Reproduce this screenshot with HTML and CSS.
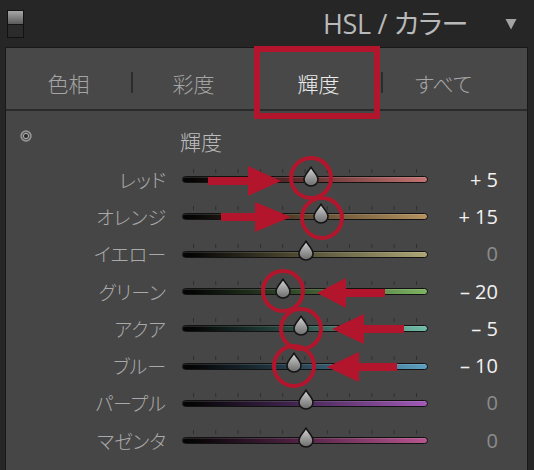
FILE: index.html
```html
<!DOCTYPE html>
<html lang="ja">
<head>
<meta charset="utf-8">
<title>HSL / カラー</title>
<link rel="stylesheet" href="styles.css">
</head>
<body>
<div class="page">
  <svg class="defs" width="0" height="0" aria-hidden="true">
    <defs>
      <linearGradient id="thumbGrad" x1="0" y1="0" x2="0" y2="1">
        <stop offset="0" stop-color="#d6d6d6"/>
        <stop offset="0.55" stop-color="#9a9a9a"/>
        <stop offset="1" stop-color="#6c6c6c"/>
      </linearGradient>
      <symbol id="thumb" viewBox="0 0 16 21">
        <path d="M8 1 C9.6 5 15 8.6 15 13.6 A7 6.4 0 0 1 1 13.6 C1 8.6 6.4 5 8 1 Z" fill="url(#thumbGrad)" stroke="#141414" stroke-width="1.6" stroke-linejoin="round"/>
      </symbol>
    </defs>
  </svg>

  <header class="topbar">
    <div class="toggle"><span class="toggle-on"></span><span class="toggle-off"></span></div>
    <h1 class="title">HSL / カラー</h1>
    <svg class="caret" width="12" height="12" viewBox="0 0 12 12"><path d="M0.5 1 H11.5 L6 11.5 Z" fill="#a3a3a3"/></svg>
  </header>

  <section class="panel">
    <nav class="tabs">
      <div class="tab">色相</div>
      <div class="tab sep">彩度</div>
      <div class="tab sep active">輝度</div>
      <div class="tab sep">すべて</div>
    </nav>

    <div class="content">
      <div class="head">
        <svg class="target" width="12" height="12" viewBox="0 0 12 12">
          <circle cx="6" cy="6" r="5" fill="#5a5a5a" stroke="#9a9a9a" stroke-width="1.4"/>
          <circle cx="6" cy="6" r="2.6" fill="#2e2e2e" stroke="#bdbdbd" stroke-width="0.9"/>
        </svg>
        <span class="head-title">輝度</span>
      </div>

      <div class="row">
        <span class="label">レッド</span>
        <div class="track red"><svg class="thumb" style="left:52.4%"><use href="#thumb"/></svg></div>
        <span class="value on">+ 5</span>
      </div>
      <div class="row">
        <span class="label">オレンジ</span>
        <div class="track orange"><svg class="thumb" style="left:56.6%"><use href="#thumb"/></svg></div>
        <span class="value on">+ 15</span>
      </div>
      <div class="row">
        <span class="label">イエロー</span>
        <div class="track yellow"><svg class="thumb" style="left:50.4%"><use href="#thumb"/></svg></div>
        <span class="value">0</span>
      </div>
      <div class="row">
        <span class="label">グリーン</span>
        <div class="track green"><svg class="thumb" style="left:41%"><use href="#thumb"/></svg></div>
        <span class="value on">– 20</span>
      </div>
      <div class="row">
        <span class="label">アクア</span>
        <div class="track aqua"><svg class="thumb" style="left:48.2%"><use href="#thumb"/></svg></div>
        <span class="value on">– 5</span>
      </div>
      <div class="row">
        <span class="label">ブルー</span>
        <div class="track blue"><svg class="thumb" style="left:45.5%"><use href="#thumb"/></svg></div>
        <span class="value on">– 10</span>
      </div>
      <div class="row">
        <span class="label">パープル</span>
        <div class="track purple"><svg class="thumb" style="left:50.4%"><use href="#thumb"/></svg></div>
        <span class="value">0</span>
      </div>
      <div class="row">
        <span class="label">マゼンタ</span>
        <div class="track magenta"><svg class="thumb" style="left:50.4%"><use href="#thumb"/></svg></div>
        <span class="value">0</span>
      </div>
    </div>
  </section>

  <svg class="marks" width="534" height="470" viewBox="0 0 534 470" aria-hidden="true">
    <g fill="none" stroke="#b3162c">
      <rect x="257" y="49" width="120" height="67" stroke-width="6"/>
      <circle cx="311" cy="178" r="20" stroke-width="4"/>
      <circle cx="322" cy="218" r="20" stroke-width="4"/>
      <circle cx="283" cy="291" r="20" stroke-width="4"/>
      <circle cx="301" cy="329" r="20" stroke-width="4"/>
      <circle cx="294" cy="366" r="20" stroke-width="4"/>
    </g>
    <g fill="#b3162c">
      <path d="M208 177 H248 V166 L281 181 L248 196 V185 H208 Z"/>
      <path d="M221 213 H255 V202 L291 217 L255 232 V221 H221 Z"/>
      <path d="M385 289 H346 V278 L317 293 L346 308 V297 H385 Z"/>
      <path d="M404 325 H364 V314 L332 329 L364 344 V333 H404 Z"/>
      <path d="M397 363 H359 V352 L327 367 L359 382 V371 H397 Z"/>
    </g>
  </svg>
</div>
</body>
</html>
```

FILE: styles.css
```css
* { box-sizing: border-box; }

html, body {
  margin: 0;
  padding: 0;
  background: #262626;
}

body {
  width: 534px;
  height: 470px;
  overflow: hidden;
  font-family: "Noto Sans CJK JP", "Noto Sans", sans-serif;
}

.page {
  position: relative;
  width: 534px;
  height: 470px;
}

.defs {
  position: absolute;
  width: 0;
  height: 0;
}

/* ---------- top bar ---------- */
.topbar {
  height: 47px;
  display: flex;
  align-items: center;
  padding-left: 7px;
}

.toggle {
  width: 17px;
  height: 28px;
  display: flex;
  flex-direction: column;
  border: 1px solid #121212;
  background: #1d1d1d;
}

.toggle-on {
  height: 13px;
  background: linear-gradient(#a7a7a7, #5b5b5b);
}

.toggle-off {
  flex: 1;
  background: #2b2b2b;
  border-top: 1px solid #151515;
}

.title {
  margin: 0 0 0 auto;
  font-family: "Open Sans", "Noto Sans CJK JP", sans-serif;
  font-weight: 400;
  font-size: 27px;
  line-height: 30px;
  color: #b9b9b9;
  letter-spacing: -0.3px;
  font-feature-settings: "palt";
}

.caret {
  margin-left: 37px;
  margin-right: 17px;
}

/* ---------- panel ---------- */
.panel {
  margin-left: 5px;
  width: 523px;
  height: 430px;
  border: 1px solid #191919;
  border-bottom: none;
  background: #464646;
}

.tabs {
  height: 63px;
  display: grid;
  grid-template-columns: repeat(4, 125px);
  align-items: center;
  padding-top: 8px;
  border-bottom: 2px solid #2a2a2a;
  background: #484848;
}

.tab {
  position: relative;
  text-align: center;
  font-size: 21px;
  font-weight: 300;
  line-height: 26px;
  color: #a5a5a5;
  font-feature-settings: "palt";
}

.tab.sep::before {
  content: "";
  position: absolute;
  left: 0;
  top: 2px;
  width: 2px;
  height: 21px;
  background: #2c2c2c;
}

.tab.active {
  color: #ededed;
}

/* ---------- content ---------- */
.content {
  padding-top: 17px;
}

.head {
  display: flex;
  align-items: flex-start;
  height: 33px;
}

.target {
  margin-left: 14px;
  margin-top: 2px;
}

.head-title {
  margin-left: 148px;
  font-size: 21px;
  font-weight: 300;
  line-height: 26px;
  color: #bdbdbd;
}

.row {
  height: 37.3px;
  display: grid;
  grid-template-columns: 160px 246px 54px;
  column-gap: 16px;
  align-items: center;
}

.label {
  text-align: right;
  font-size: 19px;
  font-weight: 300;
  line-height: 24px;
  color: #a9a9a9;
  font-feature-settings: "palt";
}

.track {
  position: relative;
  height: 7px;
  border: 1px solid #121212;
  border-radius: 4px;
  box-shadow: inset 0 1px 0 rgba(255,255,255,0.12);
}

.track::before {
  content: "";
  position: absolute;
  left: 10px;
  top: -8px;
  width: 225px;
  height: 4px;
  background-image: linear-gradient(to right, #2e2e2e 1px, transparent 1px);
  background-size: 22.3px 4px;
}

.red     { background: linear-gradient(to right, #050505 4%, #5a2a2a 45%, #c37472 100%); }
.orange  { background: linear-gradient(to right, #050505 4%, #52402a 45%, #b5925f 100%); }
.yellow  { background: linear-gradient(to right, #050505 4%, #4c4830 45%, #aca676 100%); }
.green   { background: linear-gradient(to right, #050505 4%, #324a2a 45%, #7db462 100%); }
.aqua    { background: linear-gradient(to right, #050505 4%, #2a4c44 45%, #6fbca6 100%); }
.blue    { background: linear-gradient(to right, #050505 4%, #26404e 45%, #5d9fc2 100%); }
.purple  { background: linear-gradient(to right, #050505 4%, #40244e 45%, #a25ab8 100%); }
.magenta { background: linear-gradient(to right, #050505 4%, #4c2040 45%, #b8558f 100%); }

.thumb {
  position: absolute;
  top: -11.5px;
  width: 16px;
  height: 21px;
  transform: translateX(-50%);
  overflow: visible;
}

.value {
  text-align: right;
  font-family: "Open Sans", "Noto Sans", sans-serif;
  font-size: 20px;
  line-height: 24px;
  color: #8c8c8c;
}

.value.on {
  color: #f1f1f1;
}

/* ---------- annotations ---------- */
.marks {
  position: absolute;
  left: 0;
  top: 0;
  pointer-events: none;
}
```
